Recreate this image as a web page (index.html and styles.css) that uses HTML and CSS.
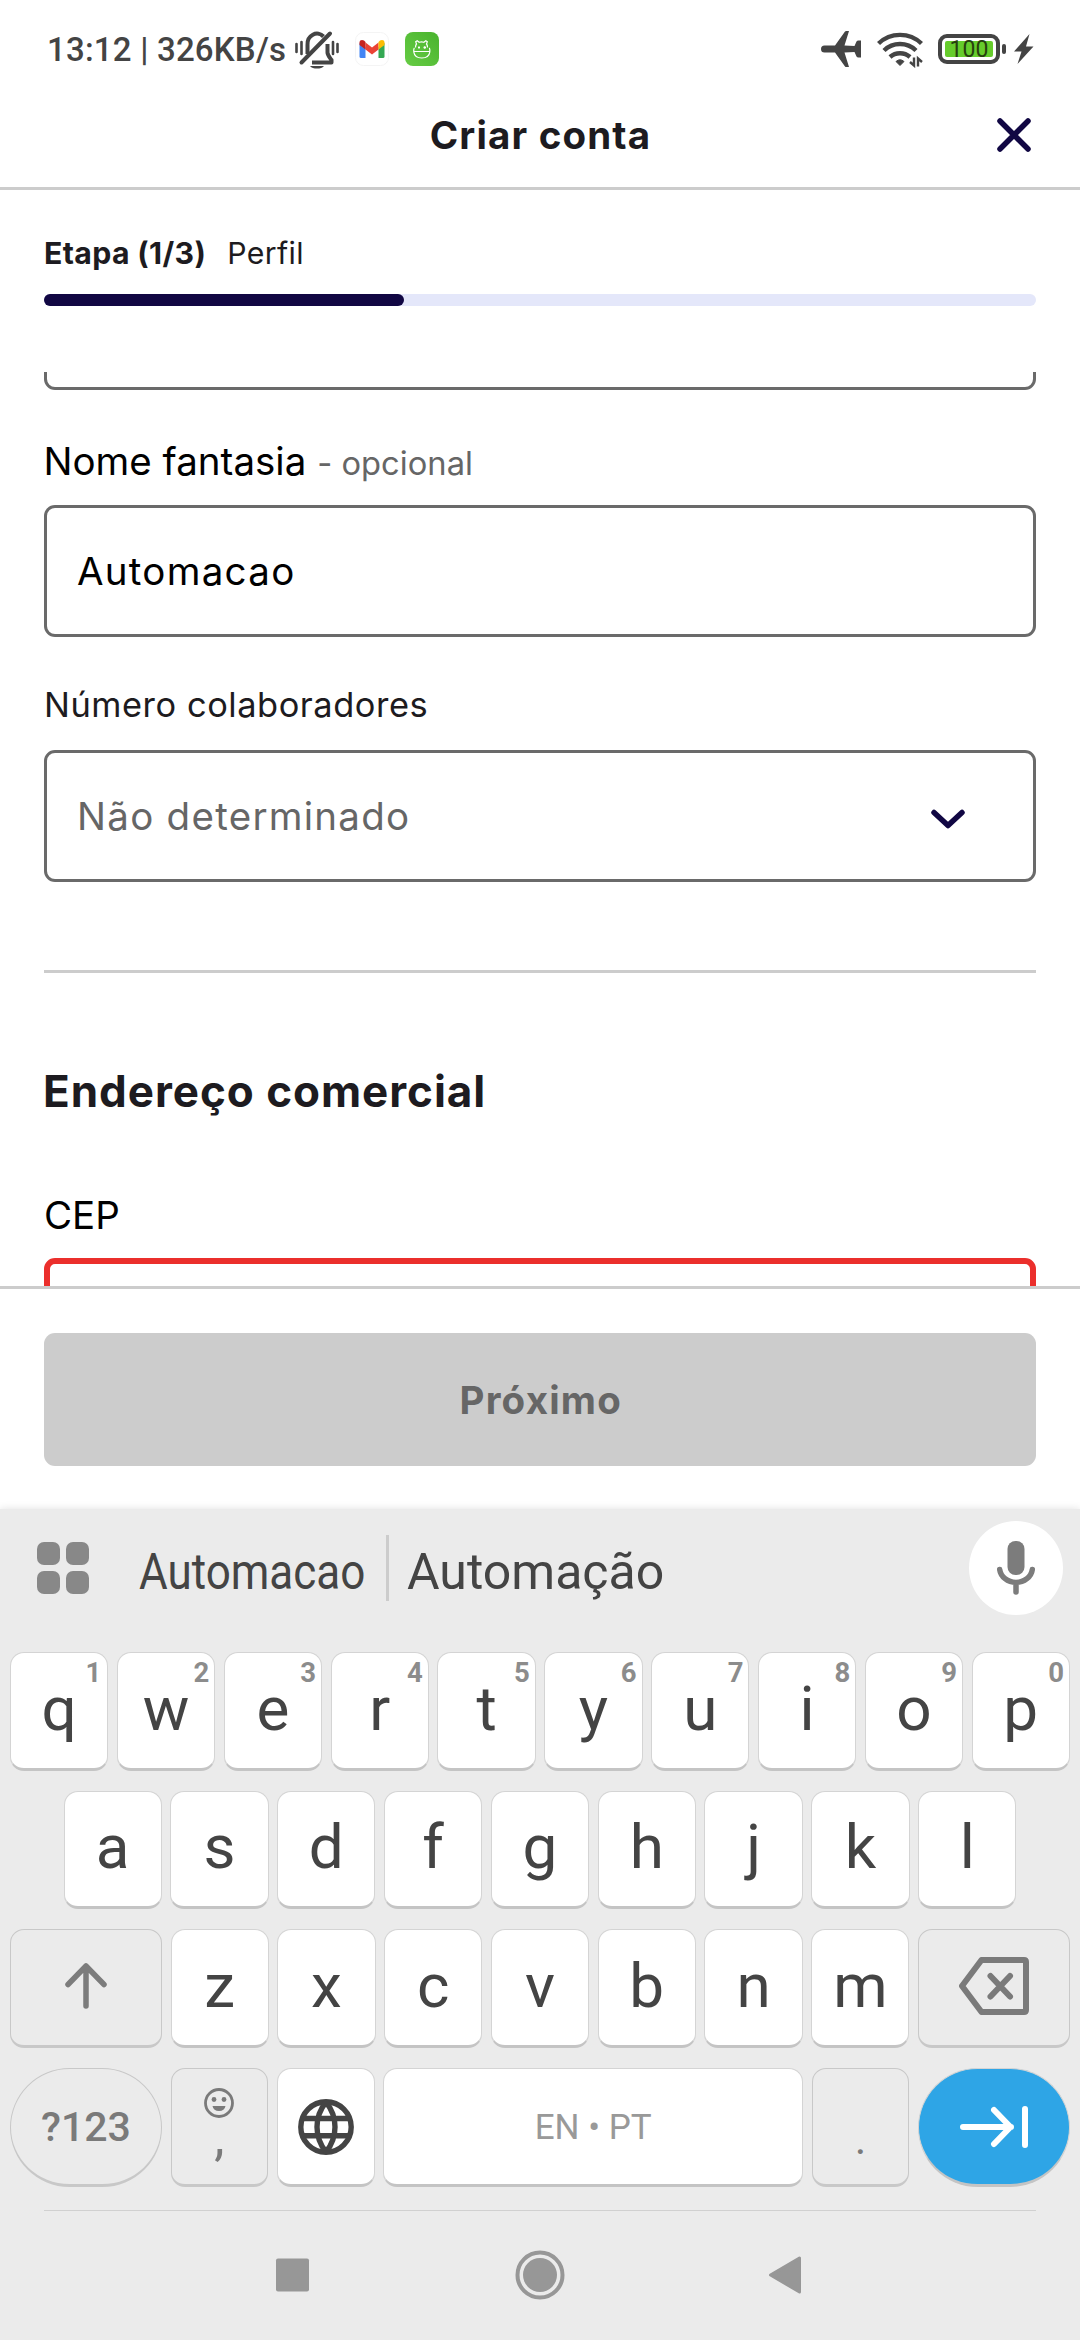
FILE: index.html
```html
<!DOCTYPE html>
<html lang="pt">
<head>
<meta charset="utf-8">
<title>Criar conta</title>
<link rel="stylesheet" href="styles.css">
</head>
<body>
<div class="status-bar">
  <span class="status-text">13:12 | 326KB/s</span>
  <svg class="ico-bell" width="44" height="40" viewBox="0 0 44 40" fill="none" stroke="#444" stroke-width="4">
    <path d="M12.500 24V15a9.500 10.500 0 0 1 16-8.500"/>
    <path d="M6.500 32.500 35 3.500" stroke-linecap="round"/>
    <path d="M32.500 14v8.500c0 2.500 1.500 4 4 7.500v2.500H17" stroke-linejoin="round"/>
    <path d="M15 36h14a8 5 0 0 1-14 0z" fill="#444" stroke="none"/>
    <path d="M1.500 14v8M6.500 12v12M38 12v12M42.500 14v8" stroke-width="2.600" stroke-linecap="round"/>
  </svg>
  <svg class="ico-gmail" width="34" height="34" viewBox="0 0 34 34">
    <rect x=".5" y=".5" width="33" height="33" rx="8" fill="#fff" stroke="#f4f4f4"/>
    <path d="M4.500 11v13.500q0 1.500 1.500 1.500h4.500V15z" fill="#4285f4"/>
    <path d="M29.500 11v13.500q0 1.500-1.500 1.500h-4.500V15z" fill="#34a853"/>
    <path d="M10.500 10.500 17 15.500l6.500-5v7L17 22.500l-6.500-5z" fill="#ea4335"/>
    <path d="M4.500 13v-2.500c0-3 3-3 4.500-2l1.500 1.500v7.500z" fill="#c5221f"/>
    <path d="M29.500 13v-2.500c0-3-3-3-4.500-2l-1.500 1.500v7.500z" fill="#fbbc04"/>
  </svg>
  <svg class="ico-app" width="34" height="34" viewBox="0 0 34 34">
    <defs><linearGradient id="g" x1="0" y1="1" x2="1" y2="0"><stop offset="0" stop-color="#66cc44"/><stop offset="1" stop-color="#49b32e"/></linearGradient></defs>
    <rect width="34" height="34" rx="8" fill="url(#g)"/>
    <path d="M10.500 15.500c0-2 .5-3 1-3.500l-.8-2.200 1.500-1 2 1.500q2.300-.7 4.600 0l2-1.500 1.500 1-.8 2.200c.5.500 1 1.500 1 3.500M8.800 19.500h16M9.500 16q-1 .5-.7 4c.5 4 4 6 8 6s7.500-2 8-6q.3-3.500-.7-4" fill="none" stroke="#fff" stroke-width="1.200"/>
    <path d="M13 15.500h2M18.500 15.500h2.500M19.700 14.300v2.400M14 14.500v2" stroke="#fff" stroke-width="1.300"/>
  </svg>
  <span class="spacer"></span>
  <svg class="ico-plane" width="40" height="36" viewBox="0 0 40 36" fill="#444">
    <path d="M3.500 14.500H14L24 .5q.5-.5 1.200-.5H28l-4.500 14.500 10 .5 2-4.500q.5-1 2-1H40v17h-2.500q-1.500 0-2-1l-2-4.500-10 .500L28 36h-2.800q-.7 0-1.200-.5L14 21.500H3.500a3.500 3.500 0 0 1 0-7z"/>
  </svg>
  <svg class="ico-wifi" width="46" height="36" viewBox="0 0 46 36" fill="none" stroke="#444" stroke-width="4.400">
    <path d="M1.500 11.500a31 31 0 0 1 43 0M7 18.500a23 23 0 0 1 32 0M13 25a15 15 0 0 1 20 0"/>
    <path d="M19 29.500q4-3.500 8 0L23 33.500z" fill="#444" stroke="#444" stroke-width="1" stroke-linejoin="round"/>
    <path d="M37 25.500v8l-4-3.500M41 34.500v-8l4 3.500" stroke-width="2.400"/>
  </svg>
  <div class="battery"><div class="battery-fill">100</div></div>
  <span class="battery-nub"></span>
  <svg class="ico-bolt" width="20" height="30" viewBox="0 0 20 30" fill="#444"><path d="M15.500 0 0 17.500h7.500L3.500 30 19.500 12.500h-7.500z"/></svg>
</div>

<header class="header">
  <h1 class="title">Criar conta</h1>
  <svg class="close" width="36" height="36" viewBox="0 0 36 36" fill="none" stroke="#110743" stroke-width="5.500" stroke-linecap="round"><path d="M4 4 32 32M32 4 4 32"/></svg>
</header>

<section class="stepper">
  <p class="step"><b>Etapa (1/3)</b><span>Perfil</span></p>
  <div class="track"><div class="bar"></div></div>
</section>

<main class="form">
  <div class="field field-cut"></div>
  <label class="label label-name"><span>Nome fantasia</span> <small>- opcional</small></label>
  <div class="field">Automacao</div>
  <label class="label label-num">Número colaboradores</label>
  <div class="field select"><span>Não determinado</span>
    <svg width="34" height="20" viewBox="0 0 34 20" fill="none" stroke="#110743" stroke-width="5.500" stroke-linecap="round" stroke-linejoin="round"><path d="M3 3.500 17 16.500 31 3.500"/></svg>
  </div>
  <hr class="rule">
  <h2 class="section-title">Endereço comercial</h2>
  <label class="label label-cep">CEP</label>
  <div class="field field-error"></div>
</main>

<footer class="footer"><button class="next">Próximo</button></footer>

<section class="keyboard">
  <div class="suggestions">
    <svg class="ico-grid" width="52" height="52" viewBox="0 0 52 52" fill="#888"><rect width="23" height="23" rx="7"/><rect x="29" width="23" height="23" rx="7"/><rect y="29" width="23" height="23" rx="7"/><rect x="29" y="29" width="23" height="23" rx="7"/></svg>
    <span class="sug sug-narrow"><span class="condensed">Automacao</span></span>
    <span class="sug-divider"></span>
    <span class="sug">Automação</span>
    <span class="mic">
      <svg width="38" height="54" viewBox="0 0 38 54" fill="none" stroke="#7c7c7c"><rect x="10.500" width="17" height="34" rx="8" fill="#7c7c7c" stroke="none"/><path d="M2.700 28.500a16.400 14.500 0 0 0 32.600 0M19 43v8" stroke-width="5.500" stroke-linecap="round"/></svg>
    </span>
  </div>
  <div class="rows">
    <div class="row">
      <div class="key">q<sup class="one">1</sup></div><div class="key">w<sup>2</sup></div><div class="key">e<sup>3</sup></div><div class="key">r<sup>4</sup></div><div class="key">t<sup>5</sup></div><div class="key">y<sup>6</sup></div><div class="key">u<sup>7</sup></div><div class="key">i<sup>8</sup></div><div class="key">o<sup>9</sup></div><div class="key">p<sup>0</sup></div>
    </div>
    <div class="row row-mid">
      <div class="key">a</div><div class="key">s</div><div class="key">d</div><div class="key">f</div><div class="key">g</div><div class="key">h</div><div class="key">j</div><div class="key">k</div><div class="key">l</div>
    </div>
    <div class="row">
      <div class="key wide soft"><svg width="42" height="46" viewBox="0 0 42 46" fill="none" stroke="#7c7c7c" stroke-width="5.500" stroke-linecap="round" stroke-linejoin="round"><path d="M21 43V3M3 21.500 21 3l18 18.500"/></svg></div>
      <div class="key">z</div><div class="key">x</div><div class="key">c</div><div class="key">v</div><div class="key">b</div><div class="key">n</div><div class="key">m</div>
      <div class="key wide soft"><svg width="70" height="58" viewBox="0 0 70 58" fill="none" stroke="#7a7a7a" stroke-width="6" stroke-linecap="round" stroke-linejoin="round"><path d="M22.500 3H65q2 0 2 2v48q0 2-2 2H22.500L3 29z"/><path d="M31.500 19 51 39.500M51 19 31.500 39.500"/></svg></div>
    </div>
    <div class="row row-last">
      <div class="key wide soft pill sym">?123</div>
      <div class="key soft comma">
        <svg width="30" height="30" viewBox="0 0 30 30" fill="none" stroke="#7a7a7a" stroke-width="2.800"><circle cx="15" cy="15" r="13.500"/><g fill="#7a7a7a" stroke="none"><circle cx="10" cy="11.500" r="2.400"/><circle cx="20" cy="11.500" r="2.400"/><path d="M8.500 18h13q-1 5-6.500 5t-6.500-5z"/></g></svg>
        <span>,</span>
      </div>
      <div class="key"><svg width="56" height="56" viewBox="0 0 56 56" fill="none" stroke="#444" stroke-width="5.400"><circle cx="28" cy="28" r="25.200"/><path d="M5 19.500h46M5 36.800h46M28 3c-12 15-12 35 0 50M28 3c12 15 12 35 0 50"/></svg></div>
      <div class="key space">EN • PT</div>
      <div class="key soft dot"><span>.</span></div>
      <div class="key wide pill enter"><svg width="70" height="44" viewBox="0 0 70 44" fill="none" stroke="#fff" stroke-width="6" stroke-linecap="round" stroke-linejoin="round"><path d="M4 22h48M35 5l16.500 17L35 39M66 4v36"/></svg></div>
    </div>
  </div>
  <nav class="nav">
    <svg width="48" height="50" viewBox="0 0 48 50" fill="#979797"><rect x="7" y="8.500" width="33" height="33" rx="2"/></svg>
    <svg width="50" height="50" viewBox="0 0 50 50" fill="none"><circle cx="25" cy="25" r="22.500" stroke="#979797" stroke-width="4"/><circle cx="25" cy="25" r="17" fill="#979797"/></svg>
    <svg width="48" height="50" viewBox="0 0 48 50" fill="#979797" stroke="#979797" stroke-width="3" stroke-linejoin="round"><path d="M6.500 25 35.500 8v34z"/></svg>
  </nav>
</section>
</body>
</html>
```
FILE: styles.css
```css
* { box-sizing: border-box; }
body { margin: 0; width: 1080px; height: 2340px; overflow: hidden; background: #fff; font-family: Inter, sans-serif; color: #1d1b20; display: flex; flex-direction: column; }
svg { display: block; flex: none; }
h1, h2, p { margin: 0; }

/* system status bar */
.status-bar { height: 98px; flex: none; display: flex; align-items: center; padding: 0 46px 0 47px; font-family: Roboto, sans-serif; color: #444; }
.status-text { font-size: 33px; line-height: 40px; font-weight: 500; letter-spacing: .2px; width: 248px; white-space: nowrap; margin-top: 2px; }
.ico-bell { margin-top: 2px; }
.ico-gmail { margin-left: 16px; }
.ico-app { margin-left: 16px; }
.spacer { flex: 1; }
.ico-wifi { margin-left: 16px; margin-top: 2px; }
.battery { margin-left: 15px; width: 62px; height: 30px; border: 4px solid #444; border-radius: 9px; padding: 3px; }
.battery-fill { height: 16px; background: #66cc2c; border-radius: 2px; font-size: 23px; line-height: 17px; text-align: center; color: #26400f; }
.battery-nub { width: 4px; height: 10px; margin-left: 2px; border-radius: 2px; background: #444; }
.ico-bolt { margin-left: 8px; }

/* app header and progress */
.header { height: 92px; flex: none; border-bottom: 3px solid #ccc; display: grid; grid-template-columns: 1fr auto 1fr; align-items: center; padding: 0 48px 16px; }
.title { grid-column: 2; font-size: 38.500px; line-height: 50px; font-weight: 700; letter-spacing: 1.150px; margin-left: 1px; }
.close { justify-self: end; }

.stepper { padding: 36px 44px 0; height: 182px; flex: none; }
.step { display: flex; gap: 21px; font-size: 30.250px; line-height: 54px; margin-bottom: 14px; letter-spacing: .35px; }
.track { height: 12px; border-radius: 6px; background: #e4e7fa; }
.bar { width: 360px; height: 12px; border-radius: 6px; background: #110743; }

/* scrolled form */
.form { height: 914px; flex: none; overflow: hidden; padding: 0 44px; }
.field { height: 132px; border: 3px solid #6a6a6a; border-radius: 11px; padding: 0 30px; display: flex; align-items: center; font-size: 38.500px; letter-spacing: 1.270px; color: #000; }
.field-cut { margin-top: -114px; }
.field-error { border: 6px solid #eb2f2c; }
.label { display: flex; align-items: baseline; color: #000; }
.label-name, .label-cep { font-size: 38.500px; line-height: 52px; }
.label-name { margin: 45px 0 18px -.5px; height: 52px; gap: 11px; }
.label-name small { font-size: 32.700px; color: #666; }
.label-num { font-size: 34.400px; line-height: 49px; margin: 43px 0 21px; letter-spacing: .55px; color: #1d1b20; }
.label-cep { margin: 67px 0 17px; }
.select { color: #666; justify-content: space-between; padding-right: 68px; }
.select svg { margin-top: 5px; }
.rule { height: 3px; border: 0; background: #ccc; margin: 88px 0; }
.section-title { font-size: 44px; line-height: 61px; font-weight: 700; letter-spacing: .970px; margin-left: -1px; }

.footer { height: 223px; flex: none; border-top: 3px solid #ccc; padding: 44px 44px 0; }
.next { display: block; width: 100%; height: 133px; border: 0; border-radius: 11px; background: #ccc; color: #666; font: 700 38.500px Inter, sans-serif; letter-spacing: 1.200px; text-indent: 1.500px; }

/* on-screen keyboard */
.keyboard { flex: 1; background: #ebebeb; box-shadow: 0 0 8px rgba(0, 0, 0, .12); font-family: Roboto, sans-serif; color: #444; }
.suggestions { height: 143px; display: flex; align-items: center; padding: 0 17px 25px 37px; font-size: 50px; }
.sug { line-height: 60px; white-space: nowrap; margin-top: 8px; }
.sug-narrow { width: 246px; margin-left: 50px; }
.condensed { display: inline-block; transform: scaleX(.88); transform-origin: 0 50%; }
.sug-divider { width: 3px; height: 66px; background: #ccc; margin: 0 18px 0 1px; }
.mic { margin-left: auto; width: 94px; height: 94px; border-radius: 50%; background: #fff; display: grid; place-items: center; }

.rows { display: flex; flex-direction: column; gap: 20.200px; padding: 0 10px; }
.row { display: flex; gap: 8.500px; height: 118.500px; }
.row-mid { padding: 0 53.500px; }
.key { position: relative; flex: 1 1 0; background: #fff; border: 1px solid #d4d4d4; border-bottom: 3px solid #c4c4c4; border-radius: 14px; display: flex; align-items: center; justify-content: center; font-size: 62px; line-height: 74px; padding-bottom: 3px; }
.wide { flex: 0 0 152px; }
.soft { background: #ebebeb; border-color: #c8c8c8; color: #7a7a7a; }
.key sup { position: absolute; top: 5px; right: 5px; font-size: 27.500px; line-height: 30px; font-weight: 700; color: #8c8c8c; }
.key sup.one { right: 6px; }
.row-last .key { padding: 2px 0 0; }
.pill { border-radius: 60px; }
.sym { font-size: 41px; font-weight: 500; }
.row-last .comma { flex-direction: column; justify-content: flex-start; padding-top: 19px; }
.comma span { font-size: 52px; line-height: 60px; margin-top: -10px; }
.row-last .space { flex: 0 0 420px; font-size: 35px; color: #999; padding-top: 4px; }
.dot span { font-size: 44px; line-height: 50px; margin-top: 24px; }
.enter { background: #2ea5e6; }

.nav { margin: 23px 44px 0; border-top: 1px solid #d0d0d0; height: 130px; display: grid; grid-template-columns: repeat(3, 247.500px); justify-content: center; align-items: center; justify-items: center; }
```
